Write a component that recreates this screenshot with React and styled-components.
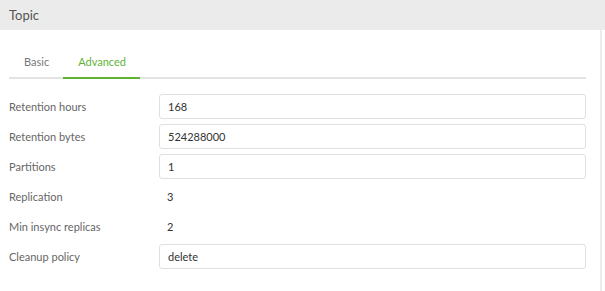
import React, { useState } from 'react';
import styled, { createGlobalStyle } from 'styled-components';

const GlobalStyle = createGlobalStyle`
  html, body {
    margin: 0;
    padding: 0;
    background: #fff;
  }
  body {
    font-family: Lato, "Open Sans", "Liberation Sans", sans-serif;
  }
`;

const Page = styled.div`
  width: 605px;
  height: 291px;
  display: flex;
  flex-direction: column;
  background: #fff;
`;

const Header = styled.div`
  height: 30px;
  flex: none;
  display: flex;
  align-items: center;
  padding-left: 9px;
  background: #ebebeb;
  color: #555;
  font-size: 13px;
`;

const Panel = styled.div`
  flex: 1;
  width: 602px;
  box-sizing: border-box;
  border-right: 2px solid #ececec;
  padding: 0 14px 0 9px;
`;

const TabBar = styled.ul`
  display: flex;
  list-style: none;
  margin: 25px 0 0;
  padding: 0;
  border-bottom: 2px solid #e4e4e4;
`;

const Tab = styled.li`
  padding: 0 14px 8px 15px;
  margin-bottom: -2px;
  font-size: 11px;
  line-height: 14px;
  cursor: pointer;
  color: ${p => (p.active ? '#5fb336' : '#777')};
  border-bottom: 2px solid ${p => (p.active ? '#5fb336' : 'transparent')};
`;

const Form = styled.div`
  display: flex;
  flex-direction: column;
  gap: 5px;
  margin-top: 15px;
`;

const Row = styled.div`
  display: grid;
  grid-template-columns: 150px 1fr;
  align-items: center;
  height: 25px;
`;

const Label = styled.div`
  font-size: 11px;
  color: #666;
`;

const Input = styled.input`
  height: 25px;
  box-sizing: border-box;
  border: 1px solid #e0e0e0;
  border-radius: 3px;
  padding: 0 8px;
  font-family: inherit;
  font-size: 11px;
  color: #333;
  outline: none;
`;

const Value = styled.div`
  padding-left: 8px;
  font-size: 11px;
  color: #333;
`;

const fields = [
  { label: 'Retention hours', value: '168', editable: true },
  { label: 'Retention bytes', value: '524288000', editable: true },
  { label: 'Partitions', value: '1', editable: true },
  { label: 'Replication', value: '3' },
  { label: 'Min insync replicas', value: '2' },
  { label: 'Cleanup policy', value: 'delete', editable: true },
];

const App = () => {
  const [tab, setTab] = useState('advanced');

  return (
    <Page>
      <GlobalStyle />
      <Header>Topic</Header>
      <Panel>
        <TabBar>
          <Tab active={tab === 'basic'} onClick={() => setTab('basic')}>
            Basic
          </Tab>
          <Tab active={tab === 'advanced'} onClick={() => setTab('advanced')}>
            Advanced
          </Tab>
        </TabBar>
        <Form>
          {fields.map(({ label, value, editable }) => (
            <Row key={label}>
              <Label>{label}</Label>
              {editable ? <Input defaultValue={value} /> : <Value>{value}</Value>}
            </Row>
          ))}
        </Form>
      </Panel>
    </Page>
  );
};

export default App;
